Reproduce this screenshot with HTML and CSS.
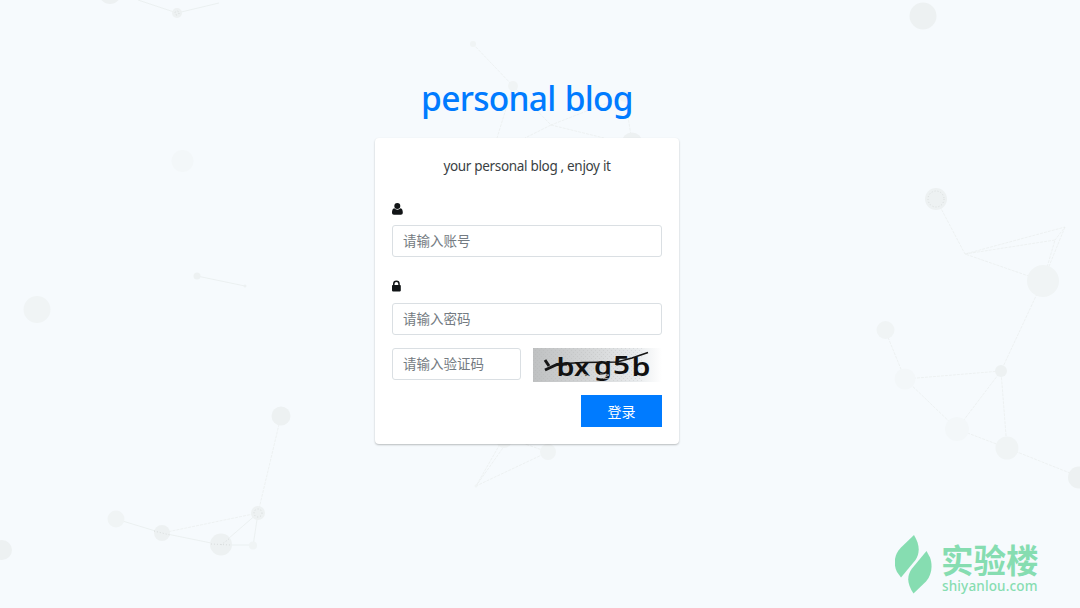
FILE: index.html
```html
<!DOCTYPE html>
<html lang="zh">
<head>
<meta charset="utf-8">
<title>personal blog</title>
<link rel="stylesheet" href="styles.css">
</head>
<body>
<svg class="particles" viewBox="0 0 1080 608" aria-hidden="true">
  <g class="links">
    <path d="M138 0L177 13L219 3M197 276L245 286M116 519L162 533L221 545L253 545M258 513L221 545M258 513L253 546"/>
    <path class="weak" d="M281 416L258 513L162 533"/>
    <path class="weak" d="M936 199L965 254L1065 227L1055 240M965 254L1055 240L1043 281L965 254M1065 227L1043 281L1001 371L1007 448L1080 477M885 330L905 379L957 429L1007 448M905 379L1001 371L957 429"/>
    <path class="weak" d="M473 44L513 86L551 125L625 96L632 143M513 86L497 138M551 125L525 138M551 125L604 138M500 444L476 486L548 452L525 444M505 445L476 486"/>
  </g>
  <g class="dots">
    <circle cx="110" cy="-7" r="11"/><circle cx="177" cy="13" r="5"/>
    <circle cx="197" cy="276" r="3.5"/><circle cx="245" cy="286" r="1.5"/>
    <circle cx="281" cy="416" r="9.5"/><circle cx="258" cy="513" r="7"/>
    <circle cx="162" cy="533" r="8"/><circle cx="221" cy="544.5" r="11"/>
    <circle cx="2" cy="550" r="10"/><circle cx="923" cy="16" r="13.5"/>
    <circle cx="936" cy="199" r="11"/><circle cx="1079" cy="477.500" r="11"/>
    <circle cx="632" cy="143" r="10.500"/><circle cx="1001" cy="371" r="6"/>
  </g>
  <g class="dots faint">
    <circle cx="37" cy="309.500" r="13.500"/><circle cx="116" cy="519" r="8.500"/>
    <circle cx="253" cy="545.500" r="4"/><circle cx="548" cy="452" r="8"/>
    <circle cx="1007" cy="448" r="11.500"/><circle cx="1043" cy="281" r="16"/>
    <circle cx="885.500" cy="330" r="9"/><circle cx="513" cy="86" r="5"/>
    <circle cx="473" cy="44" r="3"/><circle cx="476" cy="486" r="1.500"/>
    <circle cx="625" cy="96" r="6"/><circle cx="504" cy="440" r="8"/>
  </g>
  <g class="dots faintest">
    <circle cx="182.500" cy="161" r="11"/><circle cx="905" cy="379" r="10.500"/><circle cx="957" cy="429" r="12"/>
  </g>
  <g class="centers">
    <circle cx="177" cy="13" r="2"/><circle cx="258" cy="513" r="4"/><circle cx="936" cy="199" r="8"/>
    <path d="M154 531l16 4M211 544l20 1M221 545l9-7"/>
  </g>
</svg>
<main class="page">
  <h1 class="title">personal blog</h1>
  <form class="card">
    <p class="intro">your personal blog , enjoy it</p>
    <label class="field-icon" for="account">
      <svg class="icon" viewBox="0 0 12 12"><circle cx="5.300" cy="3" r="3"/><path d="M2.300 5.200C.5 5.500 0 7.500 0 9.800c0 1.200.8 2 1.900 2h7c1.100 0 1.900-.8 1.900-2 0-2.300-.5-4.300-2.300-4.600a4 4 0 0 1-6.200 0z"/></svg>
    </label>
    <input class="control account" id="account" type="text" placeholder="请输入账号">
    <label class="field-icon" for="password">
      <svg class="icon" viewBox="0 0 12 12"><path d="M1 5V3.900a3.400 3.400 0 0 1 6.800 0V5h.2c.5 0 .8.300.8.800v4.800c0 .5-.3.800-.8.800H.8c-.5 0-.8-.3-.8-.8V5.800C0 5.300.3 5 .8 5zm1.500 0h3.800V3.900a1.900 1.900 0 0 0-3.800 0z"/></svg>
    </label>
    <input class="control password" id="password" type="password" placeholder="请输入密码">
    <div class="captcha-row">
      <input class="control code" type="text" placeholder="请输入验证码">
      <svg class="captcha" viewBox="0 0 129 34" role="img" aria-label="captcha">
        <defs>
          <linearGradient id="paper"><stop offset="0" stop-color="#bfc1c2"/><stop offset=".5" stop-color="#d7d9da"/><stop offset=".8" stop-color="#e8ebed"/><stop offset="1" stop-color="#fff"/></linearGradient>
          <pattern id="grain" width="4" height="4" patternUnits="userSpaceOnUse"><path class="grain" d="M0 0h1v1H0zM2 2h1v1H2z"/></pattern>
        </defs>
        <rect width="129" height="34" fill="url(#paper)"/>
        <rect width="110" height="34" fill="url(#grain)"/>
        <g class="captcha-text">
          <text x="23.500" y="27.500" textLength="18" lengthAdjust="spacingAndGlyphs">b</text>
          <text x="41" y="28" textLength="16" lengthAdjust="spacingAndGlyphs">x</text>
          <text x="61" y="27" textLength="18" lengthAdjust="spacingAndGlyphs">g</text>
          <text x="80" y="26" textLength="17" lengthAdjust="spacingAndGlyphs">5</text>
          <text x="98.500" y="28" textLength="19" lengthAdjust="spacingAndGlyphs">b</text>
        </g>
        <path class="stroke thick" d="M12 12l4 6M12 22l12-5.500 10-.5"/>
        <path class="stroke" d="M24 16L50 14.500 84 14l15-4L115 4.500"/>
        <path class="scratch" d="M47 25l9 3M67 26l9 1-6 3 6 1"/>
      </svg>
    </div>
    <button class="submit" type="button">登录</button>
  </form>
</main>
<div class="brand">
  <svg class="brand-mark" viewBox="0 0 37 60"><path d="M19 0L6 12.500C-1.500 20-1.500 30 2 37L6 42.500 20.500 25C25 18 25 10 19 0z"/><path d="M31.500 16L17 33.500C11.500 41 12 49 18.500 58.500L31 46.500C37.500 39 37.500 29 35 22.500z"/></svg>
  <div class="brand-text">
    <div class="brand-name">实验楼</div>
    <div class="brand-url">shiyanlou.com</div>
  </div>
</div>
</body>
</html>
```
FILE: styles.css
```css
* { box-sizing: border-box; }

body {
  margin: 0;
  height: 608px;
  overflow: hidden;
  background: #f6fafd;
  color: #3a3f44;
  font-family: "Noto Sans", "Noto Sans CJK SC", sans-serif;
}

.particles {
  position: absolute;
  inset: 0;
  width: 1080px;
  height: 608px;
}

.links {
  fill: none;
  stroke: #e9eded;
  stroke-width: .8;
}

.weak {
  stroke: #ebefef;
  stroke-dasharray: 3 1;
}

.dots { fill: #edf1f2; }
.faint { fill: #f0f4f5; }
.faintest { fill: #f3f7f9; }

.centers {
  fill: none;
  stroke: #d9dddd;
  stroke-width: 1;
  stroke-dasharray: 1 2;
}

.page {
  position: relative;
  display: flex;
  flex-direction: column;
  align-items: center;
  padding: 77px 26px 0 0;
}

.title {
  margin: 0 0 19px;
  color: #007bff;
  font-size: 33.5px;
  line-height: 42px;
  font-weight: 500;
  letter-spacing: -.7px;
  word-spacing: 1px;
  white-space: nowrap;
}

.card {
  display: flex;
  flex-direction: column;
  width: 304px;
  height: 306px;
  padding: 17px 17px 16px;
  border-radius: 4px;
  background: #fff;
  box-shadow: 0 1px 2px rgba(0, 0, 0, .25);
}

.intro {
  margin: 0;
  font-size: 13.5px;
  line-height: 22px;
  text-align: center;
  letter-spacing: -.32px;
}

.field-icon {
  display: block;
  height: 12px;
  margin-top: 26px;
}

.icon {
  display: block;
  width: 12px;
  height: 12px;
  fill: #111416;
}

.control {
  display: block;
  width: 270px;
  height: 32px;
  padding: 0 10px;
  border: 1px solid #dadfe3;
  border-radius: 3px;
  background: #fff;
  color: #495057;
  font: 13.5px/20px "Noto Sans", "Noto Sans CJK SC", sans-serif;
}

.control::placeholder {
  color: #747b82;
  font-family: "Noto Sans CJK SC", sans-serif;
  opacity: 1;
}

.account { margin-top: 10px; }
.account + .field-icon { margin-top: 23px; }
.password { margin-top: 11px; }

.captcha-row {
  display: flex;
  align-items: flex-start;
  gap: 12px;
  margin-top: 13px;
}

.code { width: 129px; }

.captcha {
  display: block;
  width: 129px;
  height: 34px;
  overflow: visible;
}

.captcha-text {
  fill: #111;
  font: 600 26px "Noto Sans", sans-serif;
}

.grain { fill: #aaa; opacity: .25; }

.stroke {
  fill: none;
  stroke: #151515;
  stroke-width: 1.6;
}

.thick { stroke-width: 3; }

.scratch {
  fill: none;
  stroke: #ccc;
  stroke-width: .8;
}

.submit {
  align-self: flex-end;
  width: 81px;
  height: 32px;
  margin-top: 13px;
  padding: 0;
  border: 0;
  background: #007bff;
  color: #fff;
  font: 400 14px/32px "Noto Sans CJK SC", sans-serif;
}

.brand {
  position: absolute;
  left: 895px;
  top: 535px;
  display: flex;
  gap: 9px;
  color: #86ddb1;
}

.brand-mark {
  width: 37px;
  height: 60px;
  fill: currentColor;
}

.brand-text { padding-top: 5px; }

.brand-name {
  font: 700 32.5px/38px "Noto Sans CJK SC", sans-serif;
  white-space: nowrap;
}

.brand-url {
  padding-left: 1px;
  font: 500 13.5px/16px "Noto Sans", sans-serif;
  letter-spacing: .15px;
}
```
